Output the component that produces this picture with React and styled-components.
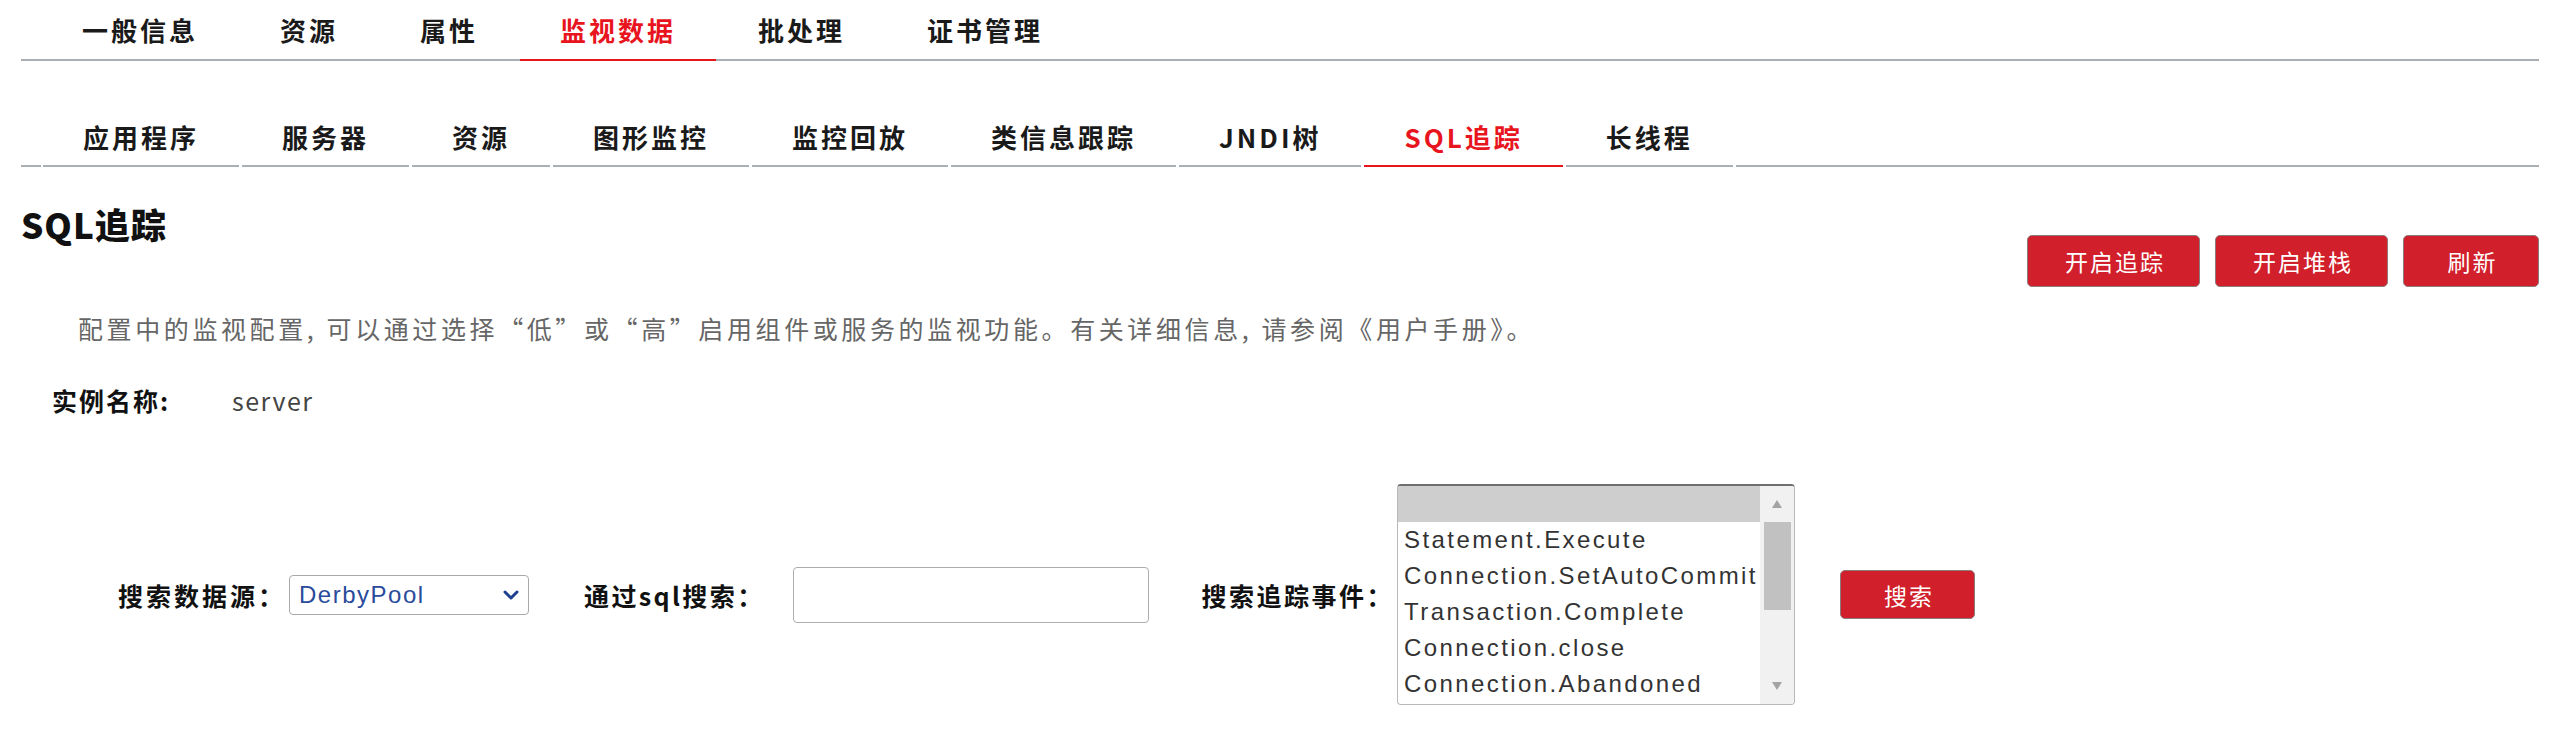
import React from 'react';
import styled, { createGlobalStyle } from 'styled-components';

const GlobalStyle = createGlobalStyle`
  body {
    margin: 0;
    background: #fff;
    font-family: "Noto Sans CJK SC", "Noto Sans", sans-serif;
    color: #1a1a1a;
  }
`;

const Page = styled.div`
  padding: 0 21px 0 21px;
`;

const TopNav = styled.nav`
  display: flex;
  gap: 2px;
  padding-left: 21px;
  border-bottom: 2px solid #a8afb5;
`;

const TopTab = styled.div`
  display: flex;
  align-items: center;
  height: 59px;
  padding: 0 40px;
  margin-bottom: -2px;
  border-bottom: 2px solid ${ props => props.$active ? '#e8141e' : 'transparent' };
  font-size: 26px;
  font-weight: 700;
  letter-spacing: 3px;
  color: ${ props => props.$active ? '#e8141e' : '#1a1a1a' };
  white-space: nowrap;
`;

const SubNav = styled.nav`
  display: flex;
  gap: 3px;
  margin-top: 46px;
`;

const SubSpacer = styled.div`
  width: 20px;
  margin-right: -1px;
  border-bottom: 2px solid #a8afb5;
`;

const SubTab = styled.div`
  display: flex;
  align-items: center;
  height: 58px;
  padding: 0 40px;
  border-bottom: 2px solid ${ props => props.$active ? '#e8141e' : '#a8afb5' };
  font-size: 26px;
  font-weight: 700;
  letter-spacing: 3px;
  color: ${ props => props.$active ? '#e8141e' : '#1a1a1a' };
  white-space: nowrap;
`;

const SubFiller = styled.div`
  flex: 1;
  border-bottom: 2px solid #a8afb5;
`;

const Header = styled.div`
  display: flex;
  justify-content: space-between;
  align-items: flex-start;
  margin-top: 37px;
`;

const Title = styled.h1`
  margin: 0;
  font-size: 35px;
  line-height: 40px;
  font-weight: 900;
  letter-spacing: 1px;
  color: #111;
`;

const Actions = styled.div`
  display: flex;
  gap: 15px;
  margin-top: 31px;
`;

const RedButton = styled.button`
  box-sizing: border-box;
  height: ${ props => props.$h || 52 }px;
  min-width: ${ props => props.$w || 134 }px;
  padding: 0 34px 0 37px;
  background: #d11f2b;
  color: #fff;
  border: 1px solid #8c7b7b;
  border-radius: 5px;
  font-family: inherit;
  font-size: 23px;
  letter-spacing: 2px;
  cursor: pointer;
`;

const Description = styled.p`
  margin: 23px 0 0;
  padding-left: 57px;
  font-size: 25px;
  line-height: 36px;
  letter-spacing: 3.6px;
  color: #666;
`;

const InstanceRow = styled.div`
  display: flex;
  align-items: center;
  height: 36px;
  margin-top: 36px;
  padding-left: 31px;
`;

const InstanceLabel = styled.span`
  width: 180px;
  font-size: 25px;
  font-weight: 700;
  letter-spacing: 2px;
  color: #111;
`;

const InstanceValue = styled.span`
  font-size: 25px;
  letter-spacing: 1.5px;
  color: #444;
`;

const SearchRow = styled.div`
  display: flex;
  align-items: center;
  margin-top: 66px;
  padding-left: 97px;
`;

const Field = styled.div`
  display: flex;
  align-items: center;
  gap: ${ props => props.$gap }px;
  margin-right: ${ props => props.$space }px;
`;

const FieldLabel = styled.span`
  font-size: 25px;
  font-weight: 700;
  letter-spacing: ${ props => props.$ls || 3 }px;
  color: #111;
  white-space: nowrap;
`;

const SelectBox = styled.div`
  box-sizing: border-box;
  display: flex;
  align-items: center;
  justify-content: space-between;
  width: 240px;
  height: 40px;
  padding: 0 8px 0 9px;
  border: 1px solid #a9a9a9;
  border-radius: 4px;
  font-family: "Liberation Sans", Arial, sans-serif;
  font-size: 24px;
  letter-spacing: 1.5px;
  color: #2a4b9b;
`;

const TextInput = styled.input`
  box-sizing: border-box;
  width: 356px;
  height: 56px;
  border: 1px solid #adadad;
  border-radius: 4px;
  outline: none;
`;

const ListBox = styled.div`
  box-sizing: border-box;
  display: flex;
  width: 398px;
  height: 221px;
  border: 1px solid #b8b8b8;
  border-top: 2px solid #6e6e6e;
  border-radius: 4px;
  overflow: hidden;
`;

const Options = styled.div`
  flex: 1;
  display: flex;
  flex-direction: column;
`;

const Option = styled.div`
  height: 36px;
  padding-left: 6px;
  font-family: "Liberation Sans", Arial, sans-serif;
  font-size: 24px;
  line-height: 36px;
  letter-spacing: 2.4px;
  color: #333;
  white-space: nowrap;
  background: ${ props => props.$selected ? '#cecece' : 'transparent' };
`;

const ScrollBar = styled.div`
  display: flex;
  flex-direction: column;
  width: 34px;
  background: #f1f1f1;
`;

const ScrollArrow = styled.div`
  display: flex;
  align-items: center;
  justify-content: center;
  height: 36px;
`;

const ScrollTrack = styled.div`
  flex: 1;
  display: flex;
  justify-content: center;
`;

const ScrollThumb = styled.div`
  width: 27px;
  height: 88px;
  background: #c1c1c1;
`;

const Chevron = () => (
  <svg width="18" height="12" viewBox="0 0 18 12">
    <path d="M3 3 L9 9 L15 3" fill="none" stroke="#1f3f8f" strokeWidth="3" strokeLinecap="round" strokeLinejoin="round" />
  </svg>
);

const Triangle = ({ up }) => (
  <svg width="12" height="10" viewBox="0 0 12 10">
    <polygon points={ up ? '6,1 11,9 1,9' : '1,1 11,1 6,9' } fill="#a3a3a3" />
  </svg>
);

const topTabs = ['一般信息', '资源', '属性', '监视数据', '批处理', '证书管理'];
const subTabs = ['应用程序', '服务器', '资源', '图形监控', '监控回放', '类信息跟踪', 'JNDI树', 'SQL追踪', '长线程'];
const events = ['', 'Statement.Execute', 'Connection.SetAutoCommit', 'Transaction.Complete', 'Connection.close', 'Connection.Abandoned'];

const App = () => (
  <Page>
    <GlobalStyle />
    <TopNav>
      { topTabs.map(tab => (
        <TopTab key={ tab } $active={ tab === '监视数据' }>{ tab }</TopTab>
      )) }
    </TopNav>

    <SubNav>
      <SubSpacer />
      { subTabs.map(tab => (
        <SubTab key={ tab } $active={ tab === 'SQL追踪' }>{ tab }</SubTab>
      )) }
      <SubFiller />
    </SubNav>

    <Header>
      <Title>SQL追踪</Title>
      <Actions>
        <RedButton>开启追踪</RedButton>
        <RedButton>开启堆栈</RedButton>
        <RedButton $w={ 136 }>刷新</RedButton>
      </Actions>
    </Header>

    <Description>
      配置中的监视配置, 可以通过选择“低”或“高”启用组件或服务的监视功能。有关详细信息, 请参阅《用户手册》。
    </Description>

    <InstanceRow>
      <InstanceLabel>实例名称:</InstanceLabel>
      <InstanceValue>server</InstanceValue>
    </InstanceRow>

    <SearchRow>
      <Field $gap={ 3 } $space={ 55 }>
        <FieldLabel>搜索数据源：</FieldLabel>
        <SelectBox>
          <span>DerbyPool</span>
          <Chevron />
        </SelectBox>
      </Field>
      <Field $gap={ 28 } $space={ 53 }>
        <FieldLabel $ls={ 2.4 }>通过sql搜索：</FieldLabel>
        <TextInput />
      </Field>
      <Field $gap={ 3 } $space={ 45 }>
        <FieldLabel $ls={ 2.5 }>搜索追踪事件：</FieldLabel>
        <ListBox>
          <Options>
            { events.map((ev, i) => (
              <Option key={ i } $selected={ i === 0 }>{ ev }</Option>
            )) }
          </Options>
          <ScrollBar>
            <ScrollArrow><Triangle up /></ScrollArrow>
            <ScrollTrack><ScrollThumb /></ScrollTrack>
            <ScrollArrow><Triangle /></ScrollArrow>
          </ScrollBar>
        </ListBox>
      </Field>
      <RedButton $w={ 135 } $h={ 49 }>搜索</RedButton>
    </SearchRow>
  </Page>
);

export default App;
